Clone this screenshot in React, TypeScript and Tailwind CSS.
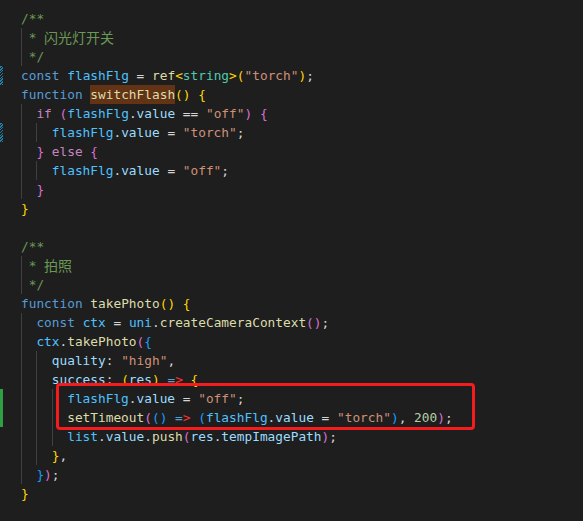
import React from "react";

type Tok = [string, string];
type Line = { g: number; sp?: boolean; toks: Tok[]; mark?: "mod" | "add" };

const C = {
  cm: "text-[#6a9955]",
  kw: "text-[#569cd6]",
  cv: "text-[#4fc1ff]",
  pv: "text-[#9cdcfe]",
  fn: "text-[#dcdcaa]",
  st: "text-[#ce9178]",
  ct: "text-[#c586c0]",
  ty: "text-[#4ec9b0]",
  op: "text-[#d4d4d4]",
  nu: "text-[#b5cea8]",
  b1: "text-[#ffd700]",
  b2: "text-[#da70d6]",
  b3: "text-[#179fff]",
  rd: "text-[#ff3030]",
  hl: "text-[#dcdcaa] bg-[#623314]",
  cj: "text-[#6a9955] text-[14px] [font-family:'Noto_Sans_CJK_SC',sans-serif]",
};

const lines: Line[] = [
  { g: 0, toks: [["/**", C.cm]] },
  { g: 0, sp: true, toks: [["* ", C.cm], ["闪光灯开关", C.cj]] },
  { g: 0, sp: true, toks: [["*/", C.cm]] },
  {
    g: 0,
    mark: "mod",
    toks: [
      ["const ", C.kw],
      ["flashFlg", C.cv],
      [" = ", C.op],
      ["ref", C.fn],
      ["<", C.b1],
      ["string", C.ty],
      [">", C.b1],
      ["(", C.b1],
      ['"torch"', C.st],
      [")", C.b1],
      [";", C.op],
    ],
  },
  {
    g: 0,
    toks: [
      ["function ", C.kw],
      ["switchFlash", C.hl],
      ["()", C.b1],
      [" ", C.op],
      ["{", C.b1],
    ],
  },
  {
    g: 1,
    toks: [
      ["if ", C.ct],
      ["(", C.b2],
      ["flashFlg", C.cv],
      [".", C.op],
      ["value", C.pv],
      [" == ", C.op],
      ['"off"', C.st],
      [")", C.b2],
      [" ", C.op],
      ["{", C.b2],
    ],
  },
  {
    g: 2,
    mark: "mod",
    toks: [
      ["flashFlg", C.cv],
      [".", C.op],
      ["value", C.pv],
      [" = ", C.op],
      ['"torch"', C.st],
      [";", C.op],
    ],
  },
  { g: 1, toks: [["}", C.b2], [" else ", C.ct], ["{", C.b2]] },
  {
    g: 2,
    toks: [
      ["flashFlg", C.cv],
      [".", C.op],
      ["value", C.pv],
      [" = ", C.op],
      ['"off"', C.st],
      [";", C.op],
    ],
  },
  { g: 1, toks: [["}", C.b2]] },
  { g: 0, toks: [["}", C.b1]] },
  { g: 0, toks: [] },
  { g: 0, toks: [["/**", C.cm]] },
  { g: 0, sp: true, toks: [["* ", C.cm], ["拍照", C.cj]] },
  { g: 0, sp: true, toks: [["*/", C.cm]] },
  {
    g: 0,
    toks: [
      ["function ", C.kw],
      ["takePhoto", C.fn],
      ["()", C.b1],
      [" ", C.op],
      ["{", C.b1],
    ],
  },
  {
    g: 1,
    toks: [
      ["const ", C.kw],
      ["ctx", C.cv],
      [" = ", C.op],
      ["uni", C.cv],
      [".", C.op],
      ["createCameraContext", C.fn],
      ["()", C.b2],
      [";", C.op],
    ],
  },
  {
    g: 1,
    toks: [
      ["ctx", C.cv],
      [".", C.op],
      ["takePhoto", C.fn],
      ["(", C.b2],
      ["{", C.b3],
    ],
  },
  {
    g: 2,
    toks: [
      ["quality", C.pv],
      [": ", C.op],
      ['"high"', C.st],
      [",", C.op],
    ],
  },
  {
    g: 2,
    toks: [
      ["success", C.pv],
      [": ", C.op],
      ["(", C.b1],
      ["res", C.pv],
      [")", C.b1],
      [" ", C.op],
      ["=", C.kw],
      [">", C.rd],
      [" ", C.op],
      ["{", C.b1],
    ],
  },
  {
    g: 3,
    mark: "add",
    toks: [
      ["flashFlg", C.cv],
      [".", C.op],
      ["value", C.pv],
      [" = ", C.op],
      ['"off"', C.st],
      [";", C.op],
    ],
  },
  {
    g: 3,
    mark: "add",
    toks: [
      ["setTimeout", C.fn],
      ["(", C.b2],
      ["()", C.b3],
      [" ", C.op],
      ["=", C.kw],
      [">", C.rd],
      [" ", C.op],
      ["(", C.b3],
      ["flashFlg", C.cv],
      [".", C.op],
      ["value", C.pv],
      [" = ", C.op],
      ['"torch"', C.st],
      [")", C.b3],
      [", ", C.op],
      ["200", C.nu],
      [")", C.b2],
      [";", C.op],
    ],
  },
  {
    g: 3,
    toks: [
      ["list", C.cv],
      [".", C.op],
      ["value", C.pv],
      [".", C.op],
      ["push", C.fn],
      ["(", C.b2],
      ["res", C.pv],
      [".", C.op],
      ["tempImagePath", C.pv],
      [")", C.b2],
      [";", C.op],
    ],
  },
  { g: 2, toks: [["}", C.b1], [",", C.op]] },
  { g: 1, toks: [["}", C.b3], [")", C.b2], [";", C.op]] },
  { g: 0, toks: [["}", C.b1]] },
];

function Gutter({ mark }: { mark?: "mod" | "add" }) {
  if (mark === "mod")
    return (
      <span className="block w-[3px] h-full shrink-0 bg-[repeating-linear-gradient(-45deg,#1b81a8_0px,#1b81a8_1px,#1e1e1e_1px,#1e1e1e_2px)]" />
    );
  if (mark === "add") return <span className="block w-[3px] h-full shrink-0 bg-[#2ea043]" />;
  return <span className="block w-[3px] h-full shrink-0" />;
}

export default function App() {
  return (
    <div className="relative w-[583px] h-[521px] overflow-hidden bg-[#1e1e1e] pt-[9px] [font-family:'DejaVu_Sans_Mono',monospace] text-[12.8px]">
      {lines.map((ln, i) => (
        <div key={i} className="flex h-[19px] leading-[19px] whitespace-pre">
          <Gutter mark={ln.mark} />
          <div className="ml-[18px] flex h-[19px]">
            {Array.from({ length: ln.g }).map((_, k) => (
              <span key={k} className="inline-block w-[15.4px] h-[19px] shadow-[inset_1px_0_0_#404040]" />
            ))}
            {ln.sp && <span className="inline-block w-[7.7px] h-[19px] shadow-[inset_1px_0_0_#404040]" />}
            {ln.toks.map(([s, c], k) => (
              <span key={k} className={c + " h-[19px]"}>
                {s}
              </span>
            ))}
          </div>
        </div>
      ))}
      <div className="absolute left-[56px] top-[383px] w-[419px] h-[47px] border-[3px] border-[#f41c1c] rounded-[4px]" />
    </div>
  );
}
